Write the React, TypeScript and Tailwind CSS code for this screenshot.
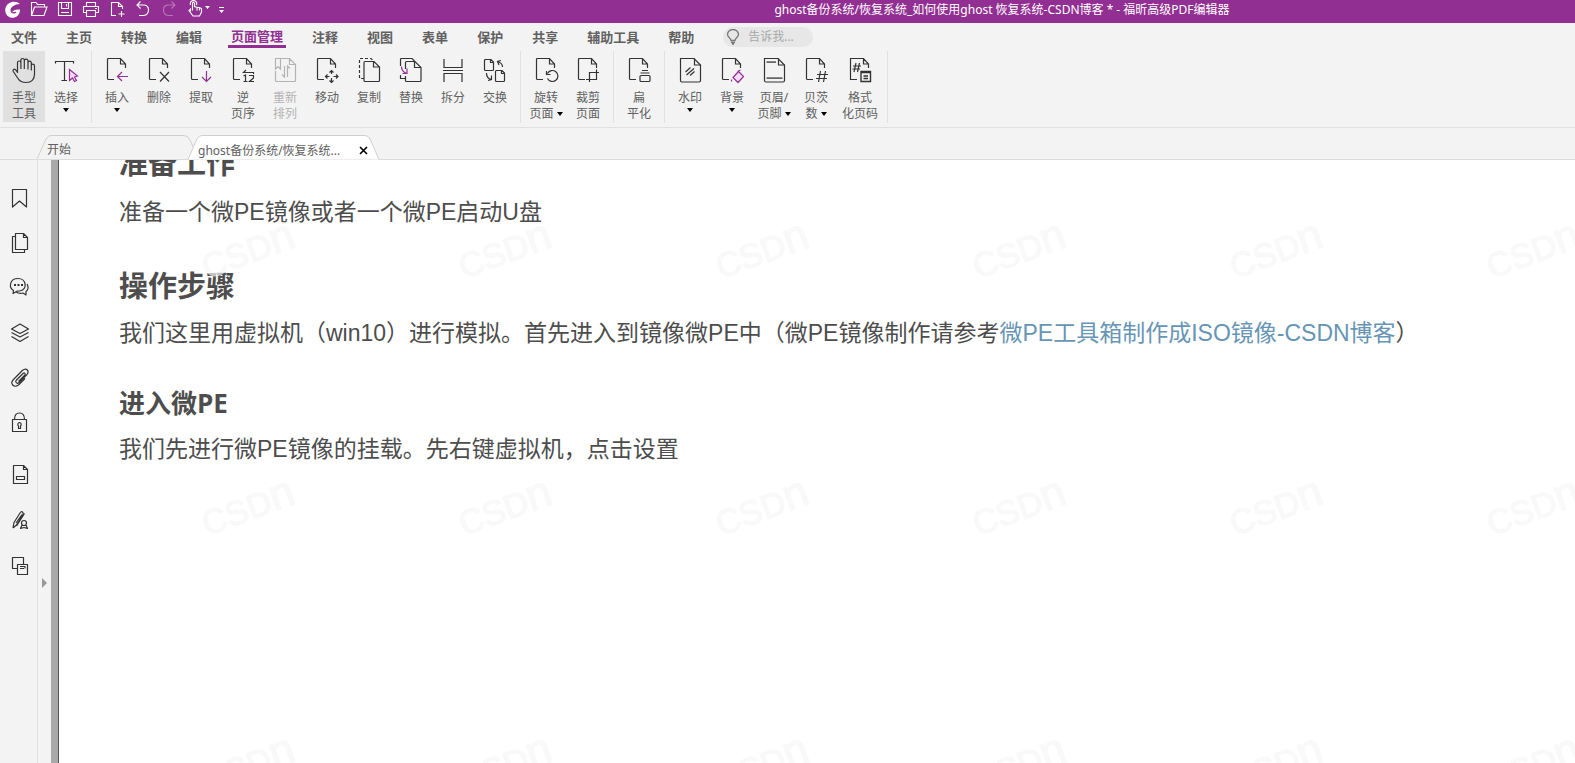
import React from "react";

const CORNER = "M11 22.5H5.5q-1 0-1-1V2.5q0-1 1-1H17.5L22.5 7V11M17.5 1.5V7H22.5";
const PAGE = "M4.5 1.5H18L24.5 8V23.5q0 1.5-1.5 1.5H6q-1.5 0-1.5-1.5Z";

function Caret() {
  return (
    <svg width="6" height="4" viewBox="0 0 6 4" className="shrink-0 fill-black" aria-hidden="true">
      <path d="M0 0H6L3 4Z" />
    </svg>
  );
}

function Icon({ children, className = "stroke-[#333]" }: { children: React.ReactNode; className?: string }) {
  return (
    <svg width="28" height="28" viewBox="0 0 28 28" fill="none" strokeWidth="1.2" className={className} aria-hidden="true">
      {children}
    </svg>
  );
}

const purple = "#922f94";

const icons: Record<string, React.ReactNode> = {
  hand: (
    <Icon>
      <path
        strokeLinejoin="round"
        d="M7.5 16V5.8q0-1.8 1.7-1.8t1.7 1.8V12M10.9 12V3.3q0-1.8 1.7-1.8t1.7 1.8V12M14.3 4q0-1.8 1.8-1.8T18 4v8.500M18 5.800q0-1.600 1.600-1.600t1.700 1.600V13.500M21.300 8.500q0-1.400 1.500-1.400 1.700 0 1.700 1.800V17c0 5-2.500 8.500-8.500 8.500-4.500 0-6.500-1.500-8-4L3.300 14.500c-1-1.700 1-3 2.300-1.700L7.500 15"
      />
    </Icon>
  ),
  select: (
    <Icon>
      <path d="M3.500 6.500V4.500H21.500V6.500M12.500 4.500V23.500M9.500 23.500H15" />
      <path d="M17.500 12.500V23.500L20.500 21L22.500 24.500L24.500 23.500L22.500 20L25.500 19Z" stroke={purple} fill="#f7dcf8" />
    </Icon>
  ),
  insert: (
    <Icon>
      <path d={CORNER} />
      <path d="M25 19.500H14.500M19 15L14.500 19.500L19 24" stroke={purple} />
    </Icon>
  ),
  remove: (
    <Icon>
      <path d={CORNER} />
      <path d="M15 15L24 24.500M24 15L15 24.500" />
    </Icon>
  ),
  extract: (
    <Icon>
      <path d={CORNER} />
      <path d="M19.500 14V24.500M15 20L19.500 24.500L24 20" stroke={purple} />
    </Icon>
  ),
  reverse: (
    <Icon>
      <path d={CORNER} />
      <path d="M17 13L14.500 15.500H24.500V17M14.500 19L16.500 18V24.500M14.500 24.500H18.500M20 18.500H24.500V21L20.500 24.500H25" />
    </Icon>
  ),
  reorder: (
    <Icon className="stroke-[#b3b3b3]">
      <path d="M9.500 1.500H18.500L24.500 7.500V23.500q0 1-1 1H5.500q-1 0-1-1V14M18.500 1.500V7.500H24.500M4.500 12V1.500H9.500V12L7 9.500ZM13.500 9V20L11 17.500M16.500 20V9L19 11.500" />
    </Icon>
  ),
  move: (
    <Icon>
      <path d={CORNER} />
      <path d="M18.500 13.500V17M18.500 21V25M12.500 19.500H16.500M20.500 19.500H25M16.500 15.500L18.500 13.500L20.500 15.500M16.500 23.500L18.500 25.500L20.500 23.500M14.500 17.500L12.500 19.500L14.500 21.500M23 17.500L25 19.500L23 21.500" />
    </Icon>
  ),
  copy: (
    <Icon>
      <path d="M9 21.500H4.500V1.500H16L18.500 4" strokeDasharray="3 2" />
      <path d="M10 4.500H19L24.500 10V23.500q0 1-1 1H10q-1 0-1-1V5.500q0-1 1-1ZM18.500 4.500V10H24.500" />
    </Icon>
  ),
  replace: (
    <Icon>
      <path d="M3.500 9V2.500q0-1 1-1H15L17.500 4M3.500 18V21.500H8" />
      <path d="M8.500 12V5.500q0-1 1-1H18L24 10.500V23.500q0 1-1 1H9.500q-1 0-1-1V19M17.500 4.500V10.500H24" />
      <path d="M4.500 9.500Q4.500 15 10 16.500M10 11.500V16.500H5.500" stroke={purple} />
    </Icon>
  ),
  split: (
    <Icon>
      <path d="M5 2V10.500H23V2M4 13.500H24M5 25V16.500H23V25" />
    </Icon>
  ),
  swap: (
    <Icon>
      <path d="M4.500 2.500H10L12.500 5V12.500q0 1-1 1H4.500q-1 0-1-1V3.500q0-1 1-1ZM9.500 2.500V5.500H12.500M15.500 13.500H21L23.500 16V23.500q0 1-1 1H15.500q-1 0-1-1V14.500q0-1 1-1ZM20.500 13.500V16.500H23.500M21.500 10Q21.500 6 17 5M20 3.500L16.500 4.500L18 8M5.500 16Q5.500 21.500 10.500 22.500M10.500 18.500V22.500L7 23.500" />
    </Icon>
  ),
  rotate: (
    <Icon>
      <path d={CORNER} />
      <path d="M15.500 16.500A5.500 5.500 0 1 1 15.500 21.500M14.500 14V17.500H18.500" />
    </Icon>
  ),
  crop: (
    <Icon>
      <path d={CORNER} />
      <path d="M12 22.500H22.500V12.500M15.500 25V15.500H25" />
    </Icon>
  ),
  flatten: (
    <Icon>
      <path d={CORNER} />
      <path d="M17 13.500H23M15.500 16H24.500M16 18.500H24q1 0 1 1V23.500q0 1-1 1H16q-1 0-1-1V19.500q0-1 1-1Z" />
    </Icon>
  ),
  watermark: (
    <Icon>
      <path d={PAGE} />
      <path d="M18.500 1.500V8H24.500M9.500 15L14.500 10.500M10.500 18L18 11.500M14 18.500L18.500 14.500" />
    </Icon>
  ),
  background: (
    <Icon>
      <path d={CORNER} />
      <path d="M15 20.500L20.500 14.500L25.500 19.500L20 25.500ZM19.500 14.500L22.500 13M13.500 22.500V24.500" stroke={purple} fill="#f7dcf8" strokeLinejoin="round" />
    </Icon>
  ),
  header: (
    <Icon>
      <path d={PAGE} />
      <path d="M18.500 1.500V8H24.500" />
      <path d="M6.500 5.200H16M6.500 21.200H22.500" strokeWidth="1.800" stroke="#666" />
    </Icon>
  ),
  bates: (
    <Icon>
      <path d={CORNER} />
      <path d="M18.500 14L16.500 25M23.500 14L21.500 25M15 17.500H26M14 21.500H25" />
    </Icon>
  ),
  format: (
    <Icon>
      <path d="M11 22.500H4.500V1.500H17.500L22.500 7V11M17.500 1.500V7H22.500M10 6L8 15M13.500 6L11.500 15M7 9H15M6.500 12H14" />
      <path d="M15 14.500H24.500V24.500H15ZM15 15.500H24.500M17.500 19H22M17.500 21.500H22" strokeWidth="1.400" />
    </Icon>
  ),
};

type Tool = { icon: string; lines: string[]; caret?: boolean; active?: boolean; off?: boolean; wide?: boolean };

const groups: Tool[][] = [
  [
    { icon: "hand", lines: ["手型", "工具"], active: true },
    { icon: "select", lines: ["选择"], caret: true },
  ],
  [
    { icon: "insert", lines: ["插入"], caret: true },
    { icon: "remove", lines: ["删除"] },
    { icon: "extract", lines: ["提取"] },
    { icon: "reverse", lines: ["逆", "页序"] },
    { icon: "reorder", lines: ["重新", "排列"], off: true },
    { icon: "move", lines: ["移动"] },
    { icon: "copy", lines: ["复制"] },
    { icon: "replace", lines: ["替换"] },
    { icon: "split", lines: ["拆分"] },
    { icon: "swap", lines: ["交换"] },
  ],
  [
    { icon: "rotate", lines: ["旋转", "页面"], caret: true },
    { icon: "crop", lines: ["裁剪", "页面"] },
  ],
  [{ icon: "flatten", lines: ["扁", "平化"] }],
  [
    { icon: "watermark", lines: ["水印"], caret: true },
    { icon: "background", lines: ["背景"], caret: true },
    { icon: "header", lines: ["页眉/", "页脚"], caret: true },
    { icon: "bates", lines: ["贝茨", "数"], caret: true },
    { icon: "format", lines: ["格式", "化页码"], wide: true },
  ],
];

function ToolButton({ icon, lines, caret, active, off, wide }: Tool) {
  return (
    <button
      disabled={off}
      className={`flex h-[71px] flex-col items-center whitespace-nowrap pt-1.5 text-xs leading-4 ${
        wide ? "w-[46px]" : "w-[42px]"
      } ${active ? "bg-[#e0e0e0]" : ""} ${off ? "text-[#b3b3b3]" : "text-[#606060]"}`}
    >
      {icons[icon]}
      <span className="mt-[5px]">{lines[0]}</span>
      {lines[1] ? (
        <span className="flex items-center gap-[3px]">
          {lines[1]}
          {caret && <Caret />}
        </span>
      ) : (
        caret && (
          <span className="flex h-2 items-center">
            <Caret />
          </span>
        )
      )}
    </button>
  );
}

const quick: [string, React.ReactNode][] = [
  ["打开", <path d="M2.500 15.500V2.500H7L8.500 4.500H15.500V7M2.500 15.500H15L18 7H5.500Z" />],
  ["保存", <path d="M3.500 2.500H16.500V15.500H3.500ZM6.500 2.500V8.500H13.500V2.500M11.500 4V6.500M6 12.500H14" />],
  ["打印", <path d="M5.500 6V2.500H14.500V6M5.500 12.500H2.500V6.500H17.500V12.500H14.500M5.500 10.500H14.500V16.500H5.500ZM14 8.500H16" />],
  ["新建", <path d="M9 15.500H4.500V2.500H11.500L15.500 6.500V9M11.500 2.500V6.500H15.500M14.500 11V17M11.500 14H17.500" />],
  ["撤销", <path d="M7.500 1.500L4 5L7.500 8.500M4 5H10.500Q15.500 5 15.500 10T10.500 15.500H6" />],
  ["重做", <path opacity="0.35" d="M12.500 1.500L16 5L12.500 8.500M16 5H9.500Q4.500 5 4.500 10T9.500 15.500H14" />],
  ["手型", <path d="M5.500 11.500V9L4 10.500 8 16H14.500L16.500 12V8.500L14.500 7.500H12.500L9.500 6.500V3Q8.500 1.500 7.500 3V10.500M5.500 5Q4.500 1 8.500 .5 12.500 1 11.500 5M12 8V10.500M14.500 8V10.500" />],
];

const menus = ["文件", "主页", "转换", "编辑", "页面管理", "注释", "视图", "表单", "保护", "共享", "辅助工具", "帮助"];

const side: [string, React.ReactNode][] = [
  ["书签", <path d="M4.500 3.500H18.500V21L11.500 15L4.500 21Z" />],
  ["页面", <path d="M7.500 5.500H4.500V21.500H16.500V18.500M7.500 2.500H15.500L19.500 6.500V18.500H7.500ZM15.500 2.500V6.500H19.500" />],
  [
    "注释",
    <>
      <path d="M5.500 14.500C.5 11.500 1.500 2.500 10 2.500s10 11.500 1.500 12.500L9 15.200 5 17.500ZM19 8c2 3.500 1 6-1 7.500V19l-3-2c-3 .7-5.500 0-7-1" />
      <path d="M6 9H8M9.500 9H11.500M13 9H15" strokeWidth="1.800" />
    </>,
  ],
  ["图层", <path d="M12 3L20.500 8L12 12.500L3.500 8ZM3.500 11.500L12 16L20.500 11.500M3.500 15.500L12 20.500L20.500 15.500" />],
  ["附件", <path d="M15 7.500L8.500 14q-1.500 1.500-.3 2.700t2.800-.2L18.500 9q2.700-3 .8-5t-5 .5L5.500 13.500q-3 3-.8 5.500t5.800 0L17 12.500M15 7.500q1.200-1 1.900-.2t-.2 1.900L10.500 15.500" />],
  ["安全", <path d="M4.500 8.500H18.500V20.500H4.500ZM6.500 8.500Q6.500 2 11.500 2T16.500 8.500M11.500 11.500a2 2 0 0 1 1 3.500V17.500H10.500V15a2 2 0 0 1 1-3.500Z" />],
  ["域", <path d="M5.500 2.500H15.500L19.500 6.500V20.500H5.500ZM15.500 2.500V6.500H19.500M8.500 13.500H16.500V16.500H8.500Z" />],
  ["签名", <path d="M5 20L6 14.500L12 5q1.500-2 2.500-1t.5 2.500L8.500 17L5 20M8 15L14 6.500M16.500 5.500L8.500 18M16 12.500a2.500 2.500 0 1 1 0 5 2.500 2.500 0 0 1 0-5ZM14 17L12.500 20.500L16 19.500L19.500 20.500L18 17" />],
  ["对比", <path d="M9 15.500H4.500V4.500H15.500V11M9.500 11.500H19.500V21.500H9.500ZM12 15.500H16M12 13.500H17V15.500" />],
];

export default function App() {
  return (
    <div className="flex h-screen flex-col overflow-hidden bg-[#f3f3f3] font-['Noto_Sans','Noto_Sans_CJK_SC',sans-serif] text-xs text-[#606060]">
      <header className="flex h-[23px] shrink-0 items-center overflow-hidden bg-[#922f92] pl-[3px] text-white">
        <svg width="20" height="20" viewBox="0 0 20 20" className="-mt-1 mr-1.5 shrink-0" aria-hidden="true">
          <path
            fill="white"
            d="M17 4C12-.5 4 2 2.500 8c-1.500 6 3.500 11 9 9.500 3.500-1 5.500-4 5.500-8-4-.5-7 .5-8 3 1.500-.8 3-.8 4.500-.5-1.500 2.500-6 2-6-1.500C7.500 7 11.500 4 17 4Z"
          />
        </svg>
        <div className="-mt-1 flex shrink-0 gap-1.5">
          {quick.map(([name, art]) => (
            <button key={name} aria-label={name}>
              <svg width="20" height="20" viewBox="0 0 20 20" fill="none" stroke="white" strokeWidth="1.1" aria-hidden="true">
                {art}
              </svg>
            </button>
          ))}
          <button aria-label="自定义快速访问工具栏" className="-ml-1.5">
            <svg width="24" height="20" viewBox="0 0 24 20" fill="white" aria-hidden="true">
              <path d="M0 6H5L2.500 9ZM14 7H19V8H14ZM14 10H19L16.500 13Z" />
            </svg>
          </button>
        </div>
        <h1 className="-mt-1 flex-1 truncate pl-[200px] text-center leading-4">
          ghost备份系统/恢复系统_如何使用ghost 恢复系统-CSDN博客 * - 福昕高级PDF编辑器
        </h1>
      </header>

      <nav className="flex h-7 shrink-0 items-center gap-[29px] pl-[11px] text-[13px] font-bold leading-5">
        {menus.map((m) => (
          <a
            key={m}
            href="#"
            className={
              m === "页面管理"
                ? "-mx-[3px] border-b-[3px] border-[#922f92] px-[3px] leading-[18px] text-[#922f92]"
                : "whitespace-nowrap"
            }
          >
            {m}
          </a>
        ))}
        <label className="flex h-5 w-[90px] items-center gap-2 rounded-full bg-[#e7e7e7] pl-[3px] font-normal">
          <svg width="14" height="16" viewBox="0 0 14 16" fill="none" stroke="#777" strokeWidth="1.300" className="shrink-0" aria-hidden="true">
            <path d="M5 11.500C5 9 1.500 8.500 1.500 5.500a5.500 5 0 0 1 11 0C12.500 8.500 9 9 9 11.500ZM5 13.500H9M6 15H8" />
          </svg>
          <input aria-label="告诉我" placeholder="告诉我..." className="w-full min-w-0 bg-transparent text-xs outline-none placeholder:text-[#a8a8a8]" />
        </label>
      </nav>

      <div className="flex h-[77px] shrink-0 border-b border-[#e0e0e0] pl-[3px]">
        {groups.map((g, i) => (
          <div key={i} className="flex">
            {g.map((t) => (
              <ToolButton key={t.icon} {...t} />
            ))}
            <div className="mx-1 h-[72px] w-px bg-[#e0e0e0]" />
          </div>
        ))}
      </div>

      <div className="flex h-8 shrink-0 items-end border-b border-[#dcdcdc] pl-[37px]">
        <button className="relative flex h-6 w-[158px] items-center pl-2.5 pt-1.5">
          <svg width="158" height="24" viewBox="0 0 158 24" className="absolute left-0 top-0" fill="#f3f3f3" stroke="#cfcfcf" aria-hidden="true">
            <path d="M0 24L9 4Q11 .5 14 .5H147Q151 .5 153 5L158 16" />
          </svg>
          <span className="relative">开始</span>
        </button>
        <div className="relative -mb-px -ml-[7px] flex h-[25px] w-[191px] items-center justify-between pl-2.5 pr-[11px] pt-1.5">
          <svg width="191" height="25" viewBox="0 0 191 25" className="absolute left-0 top-0" fill="white" stroke="#cfcfcf" aria-hidden="true">
            <path d="M0 24.500L9 4Q11 .5 14 .5H177Q180 .5 182 4L191 24.500" />
          </svg>
          <button className="relative whitespace-nowrap">ghost备份系统/恢复系统...</button>
          <button aria-label="关闭" className="relative">
            <svg width="9" height="9" viewBox="0 0 9 9" stroke="black" strokeWidth="1.600" aria-hidden="true">
              <path d="M1 1L8 8M8 1L1 8" />
            </svg>
          </button>
        </div>
      </div>

      <div className="flex min-h-0 flex-1">
        <aside className="flex w-[38px] shrink-0 flex-col items-end gap-[21px] border-r border-[#e0e0e0] pr-[5px] pt-[26px]">
          {side.map(([name, art]) => (
            <button key={name} aria-label={name} className={name === "域" ? "mt-[7px]" : ""}>
              <svg width="24" height="24" viewBox="0 0 24 24" fill="none" stroke="#333" strokeWidth="1.200" strokeLinejoin="round" aria-hidden="true">
                {art}
              </svg>
            </button>
          ))}
        </aside>
        <div className="flex w-[13px] shrink-0 flex-col pl-1 pt-[418px]">
          <button aria-label="展开面板">
            <svg width="6" height="10" viewBox="0 0 6 10" fill="#999" aria-hidden="true">
              <path d="M0 0L5 5L0 10Z" />
            </svg>
          </button>
        </div>
        <div className="w-2 shrink-0 border-r border-[#555] bg-[#a9a9a9]" />
        <main className="relative min-w-0 flex-1 overflow-hidden bg-white pl-[60px] font-['Liberation_Sans','Noto_Sans_CJK_SC',sans-serif] text-[23px] leading-8 text-[#4d4d4d]">
          <h2 className="-mt-4 text-[29px] font-bold leading-10">准备工作</h2>
          <p className="mt-3">准备一个微PE镜像或者一个微PE启动U盘</p>
          <h2 className="mt-[39px] text-[29px] font-bold leading-10">操作步骤</h2>
          <p className="mt-2.5 whitespace-nowrap">
            我们这里用虚拟机（win10）进行模拟。首先进入到镜像微PE中（微PE镜像制作请参考
            <a href="#" className="text-[#6795b5]">
              微PE工具箱制作成ISO镜像-CSDN博客
            </a>
            ）
          </p>
          <h3 className="mt-9 font-['Open_Sans','Noto_Sans_CJK_SC',sans-serif] text-[26px] font-bold leading-9">进入微PE</h3>
          <p className="mt-3">我们先进行微PE镜像的挂载。先右键虚拟机，点击设置</p>
          <svg className="pointer-events-none absolute inset-0 h-full w-full" aria-hidden="true">
            <defs>
              <pattern id="mark" x="64" y="-35" width="257" height="257" patternUnits="userSpaceOnUse">
                <text
                  x="84"
                  y="154"
                  transform="rotate(-20 84 154)"
                  fontFamily="Liberation Sans"
                  fontSize="34"
                  fill="#f6f6f6"
                  stroke="#f6f6f6"
                  strokeWidth="1.500"
                  opacity="0.7"
                >
                  CSD<tspan fontSize="44">n</tspan>
                </text>
              </pattern>
            </defs>
            <rect width="100%" height="100%" fill="url(#mark)" />
          </svg>
        </main>
      </div>
    </div>
  );
}
